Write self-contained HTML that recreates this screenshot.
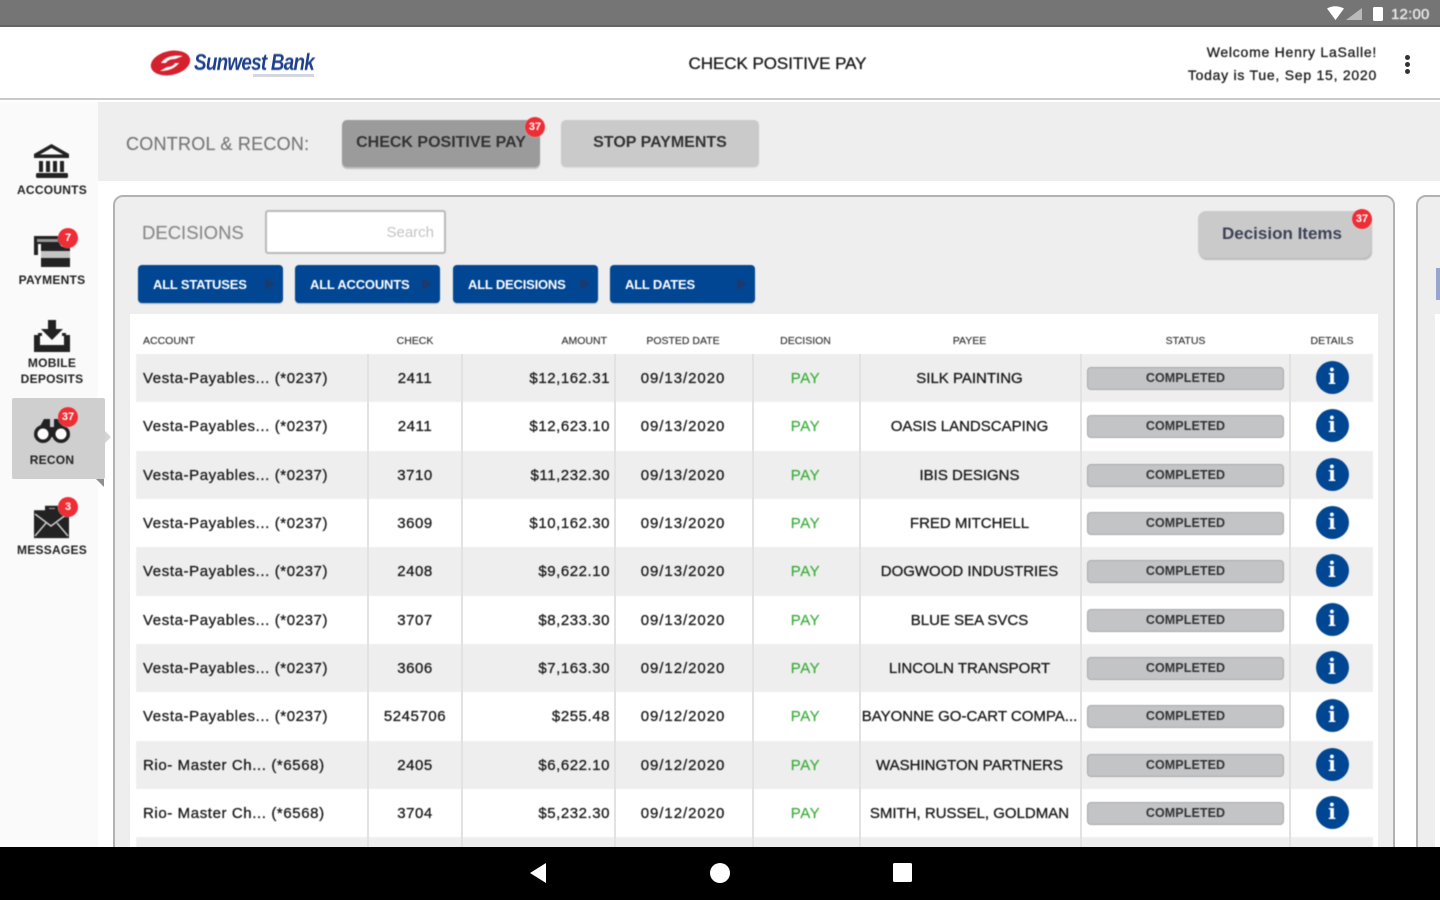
<!DOCTYPE html>
<html><head><meta charset="utf-8"><title>Check Positive Pay</title>
<style>
*{box-sizing:border-box}
html,body{margin:0;padding:0;width:1440px;height:900px;overflow:hidden;background:#fff;font-family:"Liberation Sans",sans-serif;color:#222}
.a{position:absolute}
.soft{filter:blur(.45px)}
.nav{position:absolute;left:0;width:104px;text-align:center;font-size:12px;font-weight:bold;color:#222;line-height:16px;letter-spacing:.25px}
.badge{position:absolute;width:20px;height:20px;border-radius:50%;background:#ee2d35;color:#fff;font-size:11px;font-weight:bold;text-align:center;line-height:20px;box-shadow:0 0 1px #fff}
.drop{position:absolute;top:265px;height:38px;width:145px;background:#004693;border-radius:4px;color:#fff;font-size:13px;font-weight:bold;line-height:39px;padding-left:15px;letter-spacing:-.2px;box-shadow:0 1px 1px #bbb}
.drop i{position:absolute;right:8px;top:13px;border-left:10px solid #1c3a6e;border-top:6px solid transparent;border-bottom:6px solid transparent}
.h{position:absolute;top:335px;font-size:10.5px;line-height:13px;color:#333;text-align:center;-webkit-text-stroke:.15px #333}
.r{position:absolute;left:136px;width:1237px;height:48.33px}
.s{background:#eeeeee}
.r span{position:absolute;top:0;line-height:50px;font-size:15px;color:#1a1a1a;white-space:nowrap;letter-spacing:.55px;-webkit-text-stroke:.3px #1a1a1a}
.acc{left:7px;letter-spacing:.6px!important}
.chk{left:231px;width:96px;text-align:center}
.amt{left:326px;width:148px;text-align:right}
.dat{left:478px;width:138px;text-align:center;letter-spacing:.95px!important}
.pay{left:616px;width:107px;text-align:center;color:#3cae3c!important;-webkit-text-stroke:.2px #3cae3c!important}
.pye{left:723px;width:221px;text-align:center;letter-spacing:0!important}
.r b{position:absolute;left:951px;top:13px;width:197px;height:23px;background:#c3c4c6;border:1px solid #a8a9ab;border-radius:4px;text-align:center;font-size:12.5px;line-height:20px;color:#333;font-weight:bold;letter-spacing:.1px}
.r em{position:absolute;left:1179.5px;top:7px;width:33px;height:33px;border-radius:50%;background:#004693;color:#fff;font:bold 21px/32px "DejaVu Serif",serif;text-align:center}
.v{position:absolute;top:354px;height:493px;width:2px;background:#e2e2e2}
</style></head><body>

<div class="a" style="left:0;top:0;width:1440px;height:27px;background:#757575;border-bottom:2px solid #666"></div>
<svg class="a" style="left:1325px;top:5px" width="65" height="18"><path d="M2 3.5Q10-1 19 3.5L10.5 15Z" fill="#fff"/><path d="M21 15H37V3Z" fill="#b9b9b9"/><rect x="48" y="2" width="10" height="14" rx="1.5" fill="#fff"/></svg>
<div class="a soft" style="left:1391px;top:6px;font-size:15px;line-height:17px;color:#eee;letter-spacing:.2px;-webkit-text-stroke:.3px #eee">12:00</div>

<div class="a" style="left:0;top:27px;width:1440px;height:73px;background:#fff;border-bottom:2px solid #c9c9c9"></div>
<svg class="a soft" style="left:148px;top:46px" width="46" height="34"><ellipse cx="22.500" cy="17" rx="20" ry="12" fill="#d5202e" transform="rotate(-12 22.500 17)"/><path d="M13 17Q19 8 35 10L27 13Q20 13 18 17Z M31 17Q25 25 12 25L19 21Q25 21 27 17Z" fill="#fff"/></svg>
<div class="a soft" style="left:194px;top:48px;font-size:23px;line-height:28px;font-weight:bold;font-style:italic;color:#1d3f8b;letter-spacing:-.9px;transform:scaleX(.82);transform-origin:left">Sunwest Bank</div>
<div class="a" style="left:253px;top:74px;width:61px;height:3px;background:#d4d6e0"></div>
<div class="a soft" style="left:600px;top:53px;width:355px;text-align:center;font-size:17px;line-height:22px;color:#1a1a1a;letter-spacing:-.05px;-webkit-text-stroke:.3px #1a1a1a">CHECK POSITIVE PAY</div>
<div class="a soft" style="left:1100px;top:41px;width:277px;text-align:right;font-size:14px;line-height:22.500px;color:#1a1a1a;letter-spacing:.75px;-webkit-text-stroke:.3px #1a1a1a">Welcome Henry LaSalle!<br>Today is Tue, Sep 15, 2020</div>
<div class="a" style="left:1404.500px;top:55px;width:5px;height:5px;border-radius:50%;background:#333"></div>
<div class="a" style="left:1404.500px;top:62px;width:5px;height:5px;border-radius:50%;background:#333"></div>
<div class="a" style="left:1404.500px;top:69px;width:5px;height:5px;border-radius:50%;background:#333"></div>

<div class="a" style="left:0;top:102px;width:98px;height:745px;background:#fafafa"></div>
<div class="a" style="left:98px;top:102px;width:1342px;height:79px;background:#eeeeee"></div>

<svg class="a soft" style="left:33px;top:143px" width="38" height="36"><path d="M18.500 1L36 11V15H1V11Z" fill="#222"/><path d="M18.500 5L30 11.500H7Z" fill="#fafafa"/><path d="M6 18h4v11H6zM13 18h4v11h-4zM20 18h4v11h-4zM27 18h4v11h-4z" fill="#222"/><rect x="3" y="30" width="32" height="5" rx="1.500" fill="#222"/></svg>
<div class="nav soft" style="top:182px">ACCOUNTS</div>
<svg class="a soft" style="left:33px;top:235px" width="38" height="34"><rect x="1" y="1" width="27" height="19" fill="#222"/><rect x="4" y="4" width="21" height="3" fill="#999"/><rect x="8" y="11" width="29" height="21" fill="#222"/><rect x="8" y="16" width="29" height="7" fill="#c4c4c4"/><rect x="5" y="9" width="3" height="15" fill="#fafafa"/></svg>
<div class="badge soft" style="left:58px;top:228px">7</div>
<div class="nav soft" style="top:272px">PAYMENTS</div>
<svg class="a soft" style="left:33px;top:320px" width="38" height="34"><path d="M15 0h8v9h7L19 20 8 9h7Z" fill="#222"/><path d="M1 15h6v10h24V15h6v17H1Z" fill="#222"/><rect x="5" y="13" width="4" height="3" fill="#222"/><rect x="29" y="13" width="4" height="3" fill="#222"/></svg>
<div class="nav soft" style="top:355px">MOBILE<br>DEPOSITS</div>

<div class="a" style="left:12px;top:398px;width:93px;height:81px;background:#cfcfcf;border-radius:2px"></div>
<div class="a" style="left:105px;top:431px;border-left:6px solid #d5d5d5;border-top:6px solid transparent;border-bottom:6px solid transparent"></div>
<div class="a" style="left:96px;top:479px;border-top:8px solid #8f8f8f;border-left:8px solid transparent"></div>
<svg class="a soft" style="left:32px;top:416px" width="40" height="30"><path d="M12 3h6v8h4V3h6l10 18H2Z" fill="#222"/><circle cx="11" cy="18" r="9" fill="#222"/><circle cx="29" cy="18" r="9" fill="#222"/><circle cx="11" cy="18" r="5.500" fill="#fff"/><circle cx="29" cy="18" r="5.500" fill="#fff"/></svg>
<div class="badge soft" style="left:58px;top:407px">37</div>
<div class="nav soft" style="top:452px">RECON</div>

<svg class="a soft" style="left:33px;top:503px" width="38" height="36"><path d="M12 8V3h14v5h10v31H1V8Z" fill="#222" transform="scale(1 .9)"/><path d="M16 6V5h6v1Z" fill="#aaa"/><path d="M2 11l16 12 16-12M2 33l11-13M35 33L24 20" stroke="#ccc" stroke-width="1.500" fill="none"/></svg>
<div class="badge soft" style="left:58px;top:497px">3</div>
<div class="nav soft" style="top:542px">MESSAGES</div>

<div class="a soft" style="left:126px;top:132px;font-size:18px;line-height:24px;color:#777;letter-spacing:.25px;-webkit-text-stroke:.15px #777">CONTROL &amp; RECON:</div>
<div class="a soft" style="left:342px;top:120px;width:198px;height:47px;background:#9b9b9b;border-radius:5px;box-shadow:0 2px 1px #bdbdbd;text-align:center;font-size:16px;font-weight:bold;line-height:46px;color:#333">CHECK POSITIVE PAY</div>
<div class="badge soft" style="left:525px;top:117px">37</div>
<div class="a soft" style="left:561px;top:120px;width:198px;height:47px;background:#cacaca;border-radius:5px;box-shadow:0 1px 1px #ddd;text-align:center;font-size:16px;font-weight:bold;line-height:46px;color:#333">STOP PAYMENTS</div>

<div class="a" style="left:113px;top:195px;width:1282px;height:700px;background:#eeeeee;border:2px solid #b2b2b2;border-radius:10px"></div>
<div class="a" style="left:1416px;top:195px;width:40px;height:700px;background:#eeeeee;border:2px solid #b2b2b2;border-radius:10px"></div>
<div class="a" style="left:1436px;top:268px;width:4px;height:32px;background:#9aa5cf"></div>
<div class="a" style="left:1435px;top:314px;width:5px;height:540px;background:#fff"></div>

<div class="a soft" style="left:142px;top:220px;font-size:18.5px;line-height:26px;color:#8a8a8a;-webkit-text-stroke:.15px #8a8a8a">DECISIONS</div>
<div class="a soft" style="left:265px;top:210px;width:181px;height:44px;background:#fff;border:2px solid #b9b9b9;border-radius:3px;text-align:right;padding-right:10px;font-size:15px;line-height:42px;color:#c4c4c4">Search</div>
<div class="a soft" style="left:1198px;top:211px;width:173px;height:47px;background:#cacaca;border-radius:8px;box-shadow:1px 2px 1px #bbb;text-align:center;font-size:17px;font-weight:bold;line-height:46px;color:#3d4257;padding-right:5px">Decision Items</div>
<div class="badge soft" style="left:1352px;top:209px">37</div>

<div class="drop soft" style="left:138px">ALL STATUSES<i></i></div>
<div class="drop soft" style="left:295px">ALL ACCOUNTS<i></i></div>
<div class="drop soft" style="left:453px">ALL DECISIONS<i></i></div>
<div class="drop soft" style="left:610px">ALL DATES<i></i></div>

<div class="a" style="left:130px;top:314px;width:1248px;height:540px;background:#fff"></div>

<div class="soft">
<div class="h" style="left:143px">ACCOUNT</div>
<div class="h" style="left:367px;width:96px">CHECK</div>
<div class="h" style="left:459px;width:148px;text-align:right">AMOUNT</div>
<div class="h" style="left:614px;width:138px">POSTED DATE</div>
<div class="h" style="left:752px;width:107px">DECISION</div>
<div class="h" style="left:859px;width:221px">PAYEE</div>
<div class="h" style="left:1087px;width:197px">STATUS</div>
<div class="h" style="left:1290px;width:84px">DETAILS</div>

<div class="r s" style="top:354px"><span class="acc">Vesta-Payables... (*0237)</span><span class="chk">2411</span><span class="amt">$12,162.31</span><span class="dat">09/13/2020</span><span class="pay">PAY</span><span class="pye">SILK PAINTING</span><b>COMPLETED</b><em>i</em></div>
<div class="r" style="top:402.330px"><span class="acc">Vesta-Payables... (*0237)</span><span class="chk">2411</span><span class="amt">$12,623.10</span><span class="dat">09/13/2020</span><span class="pay">PAY</span><span class="pye">OASIS LANDSCAPING</span><b>COMPLETED</b><em>i</em></div>
<div class="r s" style="top:450.660px"><span class="acc">Vesta-Payables... (*0237)</span><span class="chk">3710</span><span class="amt">$11,232.30</span><span class="dat">09/13/2020</span><span class="pay">PAY</span><span class="pye">IBIS DESIGNS</span><b>COMPLETED</b><em>i</em></div>
<div class="r" style="top:499px"><span class="acc">Vesta-Payables... (*0237)</span><span class="chk">3609</span><span class="amt">$10,162.30</span><span class="dat">09/13/2020</span><span class="pay">PAY</span><span class="pye">FRED MITCHELL</span><b>COMPLETED</b><em>i</em></div>
<div class="r s" style="top:547.330px"><span class="acc">Vesta-Payables... (*0237)</span><span class="chk">2408</span><span class="amt">$9,622.10</span><span class="dat">09/13/2020</span><span class="pay">PAY</span><span class="pye">DOGWOOD INDUSTRIES</span><b>COMPLETED</b><em>i</em></div>
<div class="r" style="top:595.660px"><span class="acc">Vesta-Payables... (*0237)</span><span class="chk">3707</span><span class="amt">$8,233.30</span><span class="dat">09/13/2020</span><span class="pay">PAY</span><span class="pye">BLUE SEA SVCS</span><b>COMPLETED</b><em>i</em></div>
<div class="r s" style="top:644px"><span class="acc">Vesta-Payables... (*0237)</span><span class="chk">3606</span><span class="amt">$7,163.30</span><span class="dat">09/12/2020</span><span class="pay">PAY</span><span class="pye">LINCOLN TRANSPORT</span><b>COMPLETED</b><em>i</em></div>
<div class="r" style="top:692.330px"><span class="acc">Vesta-Payables... (*0237)</span><span class="chk">5245706</span><span class="amt">$255.48</span><span class="dat">09/12/2020</span><span class="pay">PAY</span><span class="pye">BAYONNE GO-CART COMPA...</span><b>COMPLETED</b><em>i</em></div>
<div class="r s" style="top:740.660px"><span class="acc">Rio- Master Ch... (*6568)</span><span class="chk">2405</span><span class="amt">$6,622.10</span><span class="dat">09/12/2020</span><span class="pay">PAY</span><span class="pye">WASHINGTON PARTNERS</span><b>COMPLETED</b><em>i</em></div>
<div class="r" style="top:789px"><span class="acc">Rio- Master Ch... (*6568)</span><span class="chk">3704</span><span class="amt">$5,232.30</span><span class="dat">09/12/2020</span><span class="pay">PAY</span><span class="pye">SMITH, RUSSEL, GOLDMAN</span><b>COMPLETED</b><em>i</em></div>
<div class="r s" style="top:837.330px"></div>
</div>

<div class="v" style="left:367px"></div>
<div class="v" style="left:461px"></div>
<div class="v" style="left:614px"></div>
<div class="v" style="left:752px"></div>
<div class="v" style="left:859px"></div>
<div class="v" style="left:1080px"></div>
<div class="v" style="left:1289px"></div>

<div class="a" style="left:0;top:847px;width:1440px;height:53px;background:#000"></div>
<svg class="a" style="left:520px;top:856px" width="400" height="34"><path d="M10 17L26 7V27Z" fill="#fff"/><circle cx="200" cy="17" r="10" fill="#fff"/><rect x="373" y="7" width="19" height="19" rx="1.500" fill="#fff"/></svg>

</body></html>
